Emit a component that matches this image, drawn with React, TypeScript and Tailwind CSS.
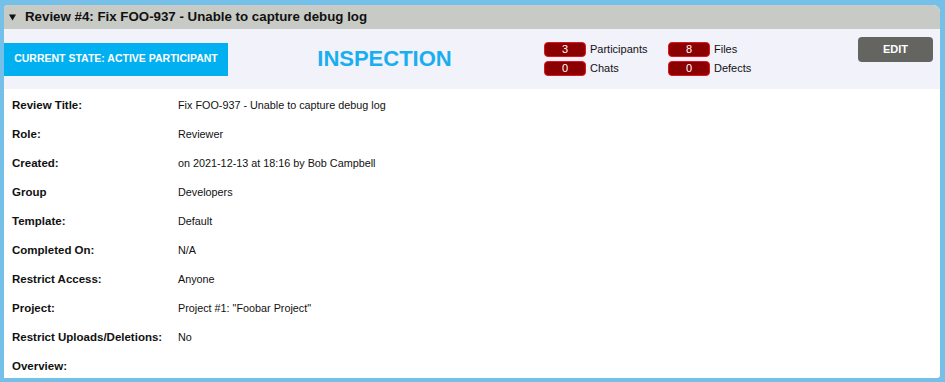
import React from "react";

const rows: [string, string][] = [
  ["Review Title:", "Fix FOO-937 - Unable to capture debug log"],
  ["Role:", "Reviewer"],
  ["Created:", "on 2021-12-13 at 18:16 by Bob Campbell"],
  ["Group", "Developers"],
  ["Template:", "Default"],
  ["Completed On:", "N/A"],
  ["Restrict Access:", "Anyone"],
  ["Project:", 'Project #1: "Foobar Project"'],
  ["Restrict Uploads/Deletions:", "No"],
  ["Overview:", ""],
];

function Counter({ count, label }: { count: number; label: string }) {
  return (
    <div className="h-[15px] flex items-center gap-[4px]">
      <div className="w-[42px] h-[15px] rounded-[4px] bg-[#8b0000] border border-[#e0141e] flex items-center justify-center text-white text-[11px] leading-none">
        {count}
      </div>
      <span className="text-[11px] leading-none text-[#111]">{label}</span>
    </div>
  );
}

export default function App() {
  return (
    <div
      className="w-[945px] h-[382px] bg-[#74c0e8] pt-[5px] pl-[4px] pr-[5px] pb-[4px]"
      style={{ fontFamily: '"Liberation Sans", Arial, sans-serif' }}
    >
      <div className="h-full bg-white rounded-tl-[4px] rounded-tr-[7px] rounded-br-[3px] overflow-hidden flex flex-col">
        {/* Header */}
        <div className="h-[24px] shrink-0 bg-[#c8cac6] flex items-center pl-[5px] gap-[9px]">
          <svg width="7" height="7" viewBox="0 0 7 7">
            <polygon points="0,0.5 7,0.5 3.5,6.5" fill="#111" />
          </svg>
          <span className="text-[13.3px] font-bold text-[#111]">
            Review #4: Fix FOO-937 - Unable to capture debug log
          </span>
        </div>

        {/* State band */}
        <div className="h-[60px] shrink-0 bg-[#f2f2fb] flex items-center">
          <div className="w-[224px] h-[33px] bg-[#00b0f0] flex items-center justify-center text-white text-[10.5px] font-bold">
            CURRENT STATE: ACTIVE PARTICIPANT
          </div>
          <div className="w-[313px] text-center text-[22px] font-bold text-[#19aeef] leading-none">
            INSPECTION
          </div>
          <div className="w-[3px]" />
          <div className="flex flex-col gap-[4px] w-[124px]">
            <Counter count={3} label="Participants" />
            <Counter count={0} label="Chats" />
          </div>
          <div className="flex flex-col gap-[4px]">
            <Counter count={8} label="Files" />
            <Counter count={0} label="Defects" />
          </div>
          <div className="flex-1" />
          <button className="self-start mt-[8px] mr-[7px] w-[75px] h-[25px] rounded-[4px] bg-[#646561] text-white text-[11px] font-bold">
            EDIT
          </button>
        </div>

        {/* Details */}
        <div className="flex flex-col pt-[2px]">
          {rows.map(([label, value]) => (
            <div key={label} className="h-[29px] shrink-0 flex items-center text-[#111]">
              <div className="w-[174px] pl-[8px] text-[11.5px] font-bold">{label}</div>
              <div className="text-[10.8px]">{value}</div>
            </div>
          ))}
        </div>
      </div>
    </div>
  );
}
